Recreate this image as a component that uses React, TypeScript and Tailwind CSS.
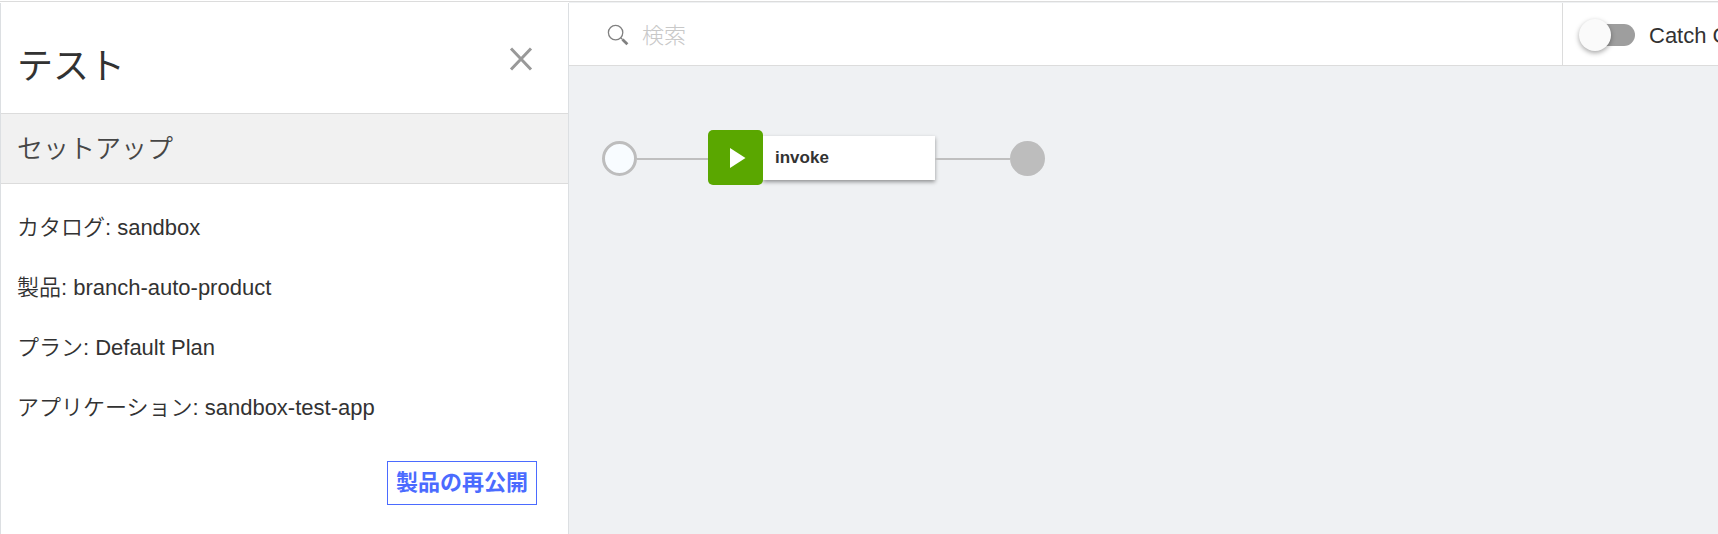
import React from "react";

const details = [
  { label: "カタログ", value: "sandbox" },
  { label: "製品", value: "branch-auto-product" },
  { label: "プラン", value: "Default Plan" },
  { label: "アプリケーション", value: "sandbox-test-app" },
];

function CloseIcon() {
  return (
    <svg width="24" height="24" viewBox="0 0 24 24" fill="none" stroke="#999999" strokeWidth="3" aria-hidden="true">
      <path d="M2 1.5 22 22.5M22 1.5 2 22.5" />
    </svg>
  );
}

function SearchIcon() {
  return (
    <svg className="shrink-0" width="22" height="22" viewBox="0 0 22 22" fill="none" stroke="#808080" aria-hidden="true">
      <circle cx="8.6" cy="8.6" r="7.2" strokeWidth="1.3" />
      <path d="M13.8 13.8 15.6 15.6" strokeWidth="1.3" />
      <path d="M15.5 15.5 20.4 20.2" strokeWidth="2.8" />
    </svg>
  );
}

function TestPanel() {
  return (
    <aside className="mt-px flex w-[569px] shrink-0 flex-col border-x border-[#dcdfe2] bg-white">
      <header className="flex h-[110px] items-center justify-between pl-4 pr-[35px]">
        <h1 className="pt-[18px] text-[36px] leading-[48px] text-[#323232]">テスト</h1>
        <button type="button" aria-label="閉じる" className="pt-0.5">
          <CloseIcon />
        </button>
      </header>
      <h2 className="flex h-[71px] items-center border-y border-[#dcdcdc] bg-[#f1f1f1] pl-4 pt-0.5 text-[26px] font-[350] text-[#464646]">
        セットアップ
      </h2>
      <dl className="flex flex-col gap-7 pl-4 pt-7 text-[22px] font-[350] leading-8 text-[#323232]">
        {details.map((d) => (
          <div key={d.label} className="flex gap-[6px]">
            <dt>{d.label}:</dt>
            <dd>{d.value}</dd>
          </div>
        ))}
      </dl>
      <div className="flex justify-end pr-[31px] pt-[37px]">
        <button type="button" className="h-11 border border-[#4b6bff] px-2 text-[22px] font-bold leading-8 text-[#4b6bff]">
          製品の再公開
        </button>
      </div>
    </aside>
  );
}

function Toolbar() {
  return (
    <div className="mt-px flex h-[63px] border-b border-[#dcdcdc] bg-white">
      <label className="flex min-w-0 flex-1 items-center gap-[13px] pl-[38px] pt-0.5">
        <SearchIcon />
        <input
          type="text"
          aria-label="検索"
          placeholder="検索"
          className="min-w-0 flex-1 bg-transparent text-[22px] font-light text-[#323232] outline-none placeholder:text-[#c8c8c8]"
        />
      </label>
      <label className="flex w-[156px] shrink-0 items-center gap-[14px] overflow-hidden whitespace-nowrap border-l border-[#dcdcdc] pl-4 pt-0.5 text-[22px] text-[#323232]">
        <span className="grid shrink-0 items-center">
          <input
            type="checkbox"
            role="switch"
            className="col-start-1 row-start-1 ml-[6px] h-[22px] w-[50px] appearance-none rounded-full bg-[#9e9e9e]"
          />
          <span className="pointer-events-none col-start-1 row-start-1 size-8 rounded-full bg-[#fafafa] shadow-[0_2px_5px_rgba(0,0,0,0.35)]" />
        </span>
        <span>Catch C</span>
      </label>
    </div>
  );
}

function Connector({ className }: { className: string }) {
  return <span className={`mt-0.5 h-0.5 bg-[#bfbfbf] ${className}`} />;
}

function Flow() {
  return (
    <div className="flex items-center pl-[33px] pt-16">
      <span className="mt-0.5 size-[35px] rounded-full border-[3px] border-[#bdbdbd] bg-[#f8fcff]" />
      <Connector className="w-[71px]" />
      <button type="button" className="flex items-center">
        <span className="z-10 flex size-[55px] items-center justify-center rounded-[5px] bg-[#5aa700]">
          <svg width="16" height="20" viewBox="0 0 16 20" className="ml-1" fill="white" aria-hidden="true">
            <path d="M0 0 15.5 10 0 20Z" />
          </svg>
        </span>
        <span className="flex h-11 w-[172px] items-center bg-white pl-3 text-[17px] font-bold text-[#323232] shadow-[0_2px_4px_rgba(0,0,0,0.4)]">
          invoke
        </span>
      </button>
      <Connector className="w-[75px]" />
      <span className="mt-0.5 size-[35px] rounded-full bg-[#bdbdbd]" />
    </div>
  );
}

export default function App() {
  return (
    <div className="flex min-h-screen flex-col bg-white pt-px font-['Liberation_Sans','Noto_Sans_CJK_JP',sans-serif]">
      <div className="flex flex-1 border-t border-[#dcdcdc]">
        <TestPanel />
        <main className="flex min-w-0 flex-1 flex-col bg-[#eff1f3]">
          <Toolbar />
          <Flow />
        </main>
      </div>
    </div>
  );
}
